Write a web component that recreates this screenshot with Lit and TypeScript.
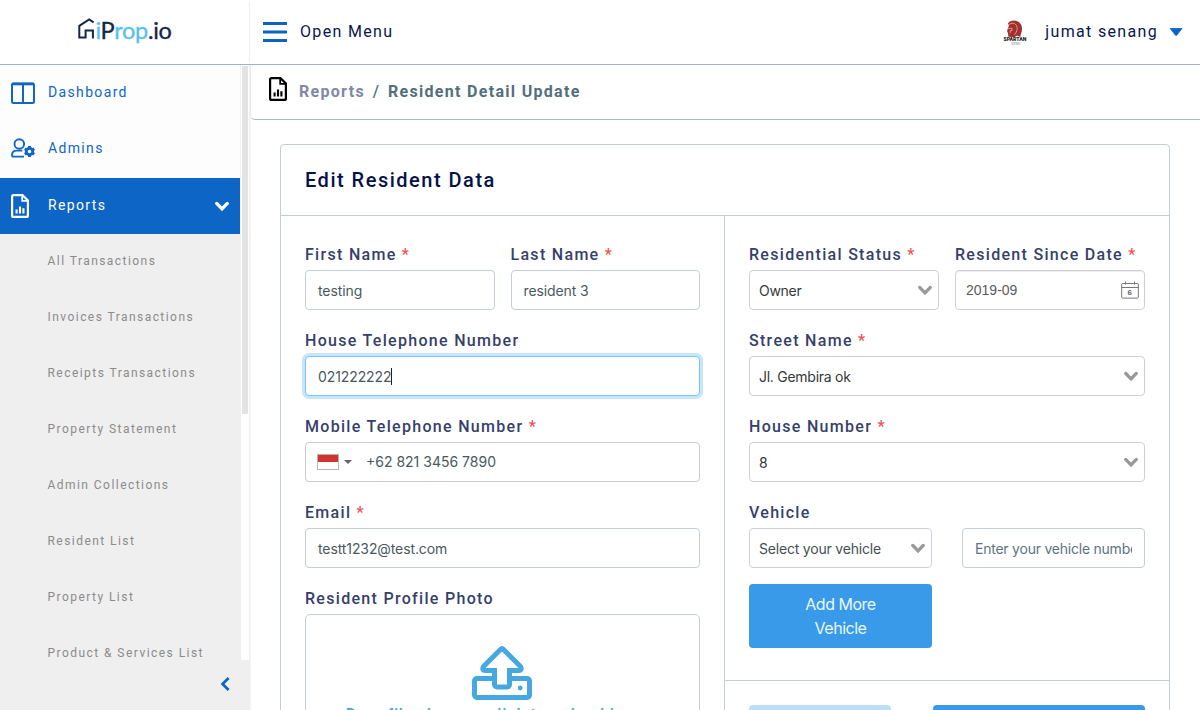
import { LitElement, html, css, nothing } from "lit";
import { customElement, property } from "lit/decorators.js";

const chevron = (cls: string) => html`<svg class=${cls} width="16" height="11" viewBox="0 0 16 11" fill="none"
  stroke="currentColor" stroke-width="3.3" stroke-linecap="round" stroke-linejoin="miter"><path d="M2.7 2.4 8 7.9 13.3 2.4"/></svg>`;

const reportIcon = (cls: string) => html`<svg class=${cls} width="18" height="24" viewBox="0 0 18 24" fill="none">
  <path d="M2.6 1.1h8.9l5.4 5.4v14.9a1.5 1.5 0 0 1-1.5 1.5H2.6a1.5 1.5 0 0 1-1.5-1.5V2.6a1.5 1.5 0 0 1 1.5-1.5z" stroke="currentColor" stroke-width="2.2"/>
  <path d="M11.2 1.5v5.3h5.4" stroke="currentColor" stroke-width="1.8"/>
  <path d="M5.6 15.6v3.8M9 12.4v7M12.4 14.2v5.2" stroke="currentColor" stroke-width="2.1"/>
</svg>`;

@customElement("form-field")
export class FormField extends LitElement {
  static styles = css`
    :host { display: block; min-width: 0; }
    .label { height: 30px; line-height: 29px; font-size: 16px; font-weight: 500; letter-spacing: 1.3px; color: #363f6c; white-space: nowrap; }
    .required { color: #f0524f; }
  `;
  @property() label = "";
  @property({ type: Boolean }) required = false;
  render() {
    return html`<div class="label">${this.label}${this.required ? html` <span class="required">*</span>` : nothing}</div><slot></slot>`;
  }
}

@customElement("app-root")
export class AppRoot extends LitElement {
  static styles = css`
    :host { display: block; height: 710px; overflow: hidden; background: #fff; font-family: Roboto, "Liberation Sans", sans-serif; }
    * { box-sizing: border-box; }
    svg { display: block; flex: none; overflow: visible; }
    .page { display: grid; grid-template: 65px 645px / 250px 950px; height: 710px; }
    .brand { border-bottom: 1px solid #9fb5c0; display: flex; padding: 2px 0 2px; }
    .brand-inner { flex: 1; border-right: 1px solid #efefef; padding: 15px 0 0 77px; }
    .wordmark { font-family: Lato, sans-serif; font-size: 23.5px; font-weight: 400; fill: #14264a; stroke: #14264a; stroke-width: 0.35; }
    .sky { fill: #56c1ee; stroke: #56c1ee; }
    .topbar { border-bottom: 1px solid #9fb5c0; display: flex; align-items: center; padding: 0 17px 0 13px; color: #0a1551; font-size: 16px; letter-spacing: 1.33px; }
    .top-text { padding-bottom: 2px; }
    .burger { margin-right: 13px; color: #0b63c5; }
    .spacer { flex: 1; }
    .avatar { margin-right: 18px; }
    .caret { margin-left: 11px; color: #0b63c5; }
    .sidebar { display: flex; flex-direction: column; background: #f1f1f1; }
    .scroll { height: 595px; display: flex; overflow: hidden; padding-right: 1px; }
    .nav { width: 240px; flex: none; background: #fdfdfd; }
    .nav-item { display: flex; align-items: center; height: 56px; padding: 0 10px 0 11px; color: #0f66c4; font-size: 14px; letter-spacing: 1.35px; }
    .nav-item.active { background: #0d65c5; color: #fff; margin-top: 1px; }
    .nav-icon { width: 37px; flex: none; }
    .nav-icon.raised { padding-bottom: 2px; }
    .nav-text { flex: 1; padding-bottom: 2px; }
    .sub { background: #efefef; }
    .sub-item { height: 56px; line-height: 54px; padding-left: 47.5px; font-size: 12px; letter-spacing: 1.45px; color: #8b8b8b; white-space: nowrap; }
    .track { flex: 1; background: #fff; border-left: 1px solid #efefef; padding: 1px 1px 0; }
    .thumb { height: 348px; background: #e3e3e3; }
    .collapse { flex: 1; background: #efefef; padding: 17px 20px 0 0; display: flex; justify-content: flex-end; color: #0d65c5; }
    .main { min-width: 0; box-shadow: inset 1px 0 0 #f4f4f4; overflow: hidden; }
    .crumbs { height: 55px; border-bottom: 1px solid #a9bcc6; border-left: 1px solid #e3e9ed; border-bottom-left-radius: 5px; background: #fff; display: flex; padding: 12px 0 0 18px; font-size: 16px; font-weight: 700; letter-spacing: 1.3px; color: #526f7e; }
    .crumb-text { margin: 5px 0 0 12px; white-space: pre; }
    .crumb-link { color: #8087a8; }
    .crumb-sep { font-weight: 500; padding: 0 2.5px; }
    .crumb-icon { color: #000; }
    .card { margin: 24px 30px 0 30px; border: 1px solid #c0ced6; border-radius: 4px; height: 620px; }
    .card-head { height: 71px; border-bottom: 1px solid #c0ced6; padding: 0 24px; line-height: 70px; font-size: 20px; font-weight: 500; letter-spacing: 1.5px; color: #041149; }
    .cols { display: grid; grid-template-columns: 444px 444px; height: 548px; }
    .col-left { border-right: 1px solid #c0ced6; padding: 24px; display: flex; flex-direction: column; gap: 16px; }
    .upper { height: 465px; padding: 24px; display: flex; flex-direction: column; gap: 16px; border-bottom: 1px solid #c0ced6; }
    .pair { display: grid; grid-template-columns: 1fr 1fr; gap: 16px; }
    .pair.wide { gap: 30px; }
    .box { height: 40px; border: 1px solid #c2cfd7; border-radius: 4px; padding: 0 12px; display: flex; align-items: center; font-family: Inter, sans-serif; font-size: 14px; letter-spacing: -0.1px; color: #4a5960; background: #fff; white-space: nowrap; overflow: hidden; }
    .txt { padding-top: 1px; }
    .box.focus { border-color: #76c7f8; box-shadow: 0 0 0 3px #c7e6fb; overflow: visible; }
    .cursor { width: 1px; height: 17px; background: #222; }
    .box.select { border-color: #ccd0dc; padding: 0 5px 0 9px; justify-content: space-between; color: #35383b; letter-spacing: -0.27px; }
    .box.vehicle { color: #454f55; letter-spacing: -0.2px; }
    .box.phone { border-color: #cacaca; padding-left: 11px; padding-bottom: 1px; letter-spacing: 0; }
    .box.date { border-color: #ccd0dc; padding: 0 5px 0 10px; justify-content: space-between; color: #5b5b5b; font-family: "Liberation Sans", sans-serif; letter-spacing: 0; box-shadow: inset 0 1px 1px #00000013; }
    .box.placeholder { color: #5e7480; letter-spacing: -0.23px; }
    .clip { overflow: hidden; padding-top: 1px; }
    .arrow { color: #999; }
    .flag { width: 22px; height: 16px; border: 1px solid #b5b5b5; background: linear-gradient(#d0342c 50%, #fff 50%); }
    .tri { margin: 0 14px 0 5px; color: #666; }
    .drop { height: 150px; border: 1px solid #c2cfd7; border-radius: 5px; padding: 31px 1px 0 0; display: flex; flex-direction: column; align-items: center; color: #46a8e0; font-size: 16px; font-weight: 500; letter-spacing: 0.85px; white-space: nowrap; }
    .drop-text { margin-top: 5px; }
    .btn { height: 64px; border-radius: 4px; background: #389ae8; color: #eaf8ff; font-family: Inter, sans-serif; font-size: 16px; letter-spacing: -0.48px; line-height: 24px; text-align: center; width: 183px; padding: 8px 40px; margin: 0; }
    .actions { display: flex; justify-content: space-between; padding: 24px; }
    .action { height: 40px; border-radius: 4px; width: 142px; background: #bcdffc; }
    .action.primary { width: 212px; background: #389ae8; }
  `;

  private subs = ["All Transactions", "Invoices Transactions", "Receipts Transactions", "Property Statement", "Admin Collections", "Resident List", "Property List", "Product & Services List"];

  private select(text: string, cls = "") {
    return html`<div class="box select ${cls}"><span class="txt">${text}</span>${chevron("arrow")}</div>`;
  }

  private header() {
    return html`
      <div class="brand"><div class="brand-inner">
        <svg width="100" height="34" viewBox="0 0 100 34">
          <path d="M16.600 5.300 12.200 2.400 2.300 8.900V20.500H8.600V13.400H15.900V21.500" fill="none" stroke="#14264a" stroke-width="2"/>
          <text class="wordmark" x="18.400" y="21.800" textLength="76.500" lengthAdjust="spacing"><tspan class="sky">i</tspan>P<tspan class="sky">rop</tspan>.io</text>
        </svg>
      </div></div>
      <div class="topbar">
        <svg class="burger" width="24" height="20" viewBox="0 0 24 20"><path d="M0 0h24v3H0zM0 8.500h24v3H0zM0 17h24v3H0z" fill="currentColor"/></svg>
        <span class="top-text">Open Menu</span><div class="spacer"></div>
        <svg class="avatar" width="24" height="26" viewBox="0 0 24 26">
          <path d="M5 4.200C6.800 1.400 12 .8 15.400 2.800c4 2.600 4.400 7.500 2.600 11.900l-.8 3.200-3.200-1.500-2.600 1.800-6-.4-.4-3.300-.9-2.400.8-2.800 1-2.600z" fill="#a3302c"/>
          <path d="M5.600 6c3-2.800 7.200-2.200 8.400 1.600.7 3-.3 5.600-2.600 8.100M5 9.400h4v2.200H7.200v2.600" fill="none" stroke="#e8c4c2" stroke-width=".7"/>
          <text x="0.400" y="22.200" font-family="Roboto" font-size="5.200" font-weight="900" letter-spacing="-.1" textLength="23" fill="#222">SPARTAN</text>
          <text x="8.400" y="25.800" font-family="Roboto" font-size="3.200" letter-spacing="0" fill="#888">GYMS</text>
        </svg>
        <span class="top-text">jumat senang</span>
        <svg class="caret" width="14" height="8" viewBox="0 0 14 8"><path d="M1.200.5h11.800L7.900 7.100q-.8.8-1.600 0z" fill="currentColor" stroke="currentColor" stroke-width=".8" stroke-linejoin="round"/></svg>
      </div>`;
  }

  private sidebar() {
    return html`<div class="sidebar">
      <div class="scroll">
        <div class="nav">
          <div class="nav-item"><div class="nav-icon">
            <svg width="24" height="22" viewBox="0 0 24 22" fill="none" stroke="currentColor"><rect x="1" y="1.500" width="22" height="19.500" rx="1.500" stroke-width="2"/><path d="M12 2v19" stroke-width="2"/><path d="M1 2h22" stroke-width="2.600"/></svg>
          </div><span class="nav-text">Dashboard</span></div>
          <div class="nav-item"><div class="nav-icon raised">
            <svg width="25" height="20" viewBox="0 0 25 20" fill="none" stroke="currentColor" stroke-width="1.900"><circle cx="8.300" cy="6" r="4.800"/><path d="M13 18.600H2.300A1.300 1.300 0 0 1 1 17.300c0-2.900 1.700-4.700 4.500-4.700h5.800"/>
            <circle cx="18.500" cy="13.500" r="3.200" stroke-width="2.800"/><path d="M18.500 8v2.600M18.500 16.400V19M13.740 10.750l2.250 1.300M21.010 14.950l2.250 1.300M13.740 16.250l2.250-1.300M21.010 12.050l2.250-1.300" stroke-width="3"/></svg>
          </div><span class="nav-text">Admins</span></div>
          <div class="nav-item active"><div class="nav-icon">${reportIcon("")}</div><span class="nav-text">Reports</span>${chevron("")}</div>
          <div class="sub">${this.subs.map((s) => html`<div class="sub-item">${s}</div>`)}</div>
        </div>
        <div class="track"><div class="thumb"></div></div>
      </div>
      <div class="collapse"><svg width="10" height="14" viewBox="0 0 10 14" fill="none" stroke="currentColor" stroke-width="2.800"><path d="M8.600 1 2.600 7l6 6"/></svg></div>
    </div>`;
  }

  private leftColumn() {
    return html`<div class="col-left">
      <div class="pair">
        <form-field label="First Name" required><div class="box"><span class="txt">testing</span></div></form-field>
        <form-field label="Last Name" required><div class="box"><span class="txt">resident 3</span></div></form-field>
      </div>
      <form-field label="House Telephone Number"><div class="box focus"><span class="txt">021222222</span><div class="cursor"></div></div></form-field>
      <form-field label="Mobile Telephone Number" required><div class="box phone"><div class="flag"></div>
        <svg class="tri" width="8" height="4" viewBox="0 0 8 4"><path d="M0 0h8L4 4z" fill="currentColor"/></svg><span>+62 821 3456 7890</span></div></form-field>
      <form-field label="Email" required><div class="box"><span class="txt">testt1232@test.com</span></div></form-field>
      <form-field label="Resident Profile Photo"><div class="drop">
        <svg width="60" height="54" viewBox="0 0 60 54" fill="none" stroke="currentColor" stroke-width="5" stroke-linejoin="round">
          <path d="M22.500 32.500H5A2.500 2.500 0 0 0 2.500 35V49A2.500 2.500 0 0 0 5 51.500H55A2.500 2.500 0 0 0 57.500 49V35A2.500 2.500 0 0 0 55 32.500H37.500"/>
          <path d="M22.500 24.500V38.500A2.500 2.500 0 0 0 25 41H35A2.500 2.500 0 0 0 37.500 38.500V24.500H47Q50.500 24 48.500 20.500L31.500 3.500Q30 2 28.500 3.500L11.500 20.500Q9.500 24 13 24.500Z" stroke-linejoin="miter"/>
          <circle cx="48.200" cy="42" r="2.400" fill="currentColor" stroke="none"/>
        </svg>
        <div class="drop-text">Drag files here or click to upload image</div>
      </div></form-field>
    </div>`;
  }

  private rightColumn() {
    return html`<div class="col-right">
      <div class="upper">
        <div class="pair">
          <form-field label="Residential Status" required>${this.select("Owner")}</form-field>
          <form-field label="Resident Since Date" required><div class="box date"><span>2019-09</span>
            <svg width="18" height="18" viewBox="0 0 18 18" fill="none" stroke="#777"><path d="M1.500 2.500h15a.8.8 0 0 1 .8.8v13a.8.8 0 0 1-.8.8h-15a.8.8 0 0 1-.8-.8v-13a.8.8 0 0 1 .8-.8zM.5 6.500h17M4.500.5v3M13.500.5v3"/><text x="6.600" y="14.400" font-family="Liberation Sans" font-size="8" font-weight="700" fill="#666" stroke="none">6</text></svg>
          </div></form-field>
        </div>
        <form-field label="Street Name" required>${this.select("Jl. Gembira ok")}</form-field>
        <form-field label="House Number" required>${this.select("8")}</form-field>
        <div>
          <form-field label="Vehicle"><div class="pair wide">
            ${this.select("Select your vehicle", "vehicle")}
            <div class="box placeholder"><div class="clip">Enter your vehicle number</div></div>
          </div></form-field>
        </div>
        <div class="btn">Add More Vehicle</div>
      </div>
      <div class="actions"><div class="action"></div><div class="action primary"></div></div>
    </div>`;
  }

  render() {
    return html`<div class="page">
      ${this.header()}
      ${this.sidebar()}
      <div class="main">
        <div class="crumbs">${reportIcon("crumb-icon")}<div class="crumb-text"><span class="crumb-link">Reports</span><span class="crumb-sep"> / </span>Resident Detail Update</div></div>
        <div class="card">
          <div class="card-head">Edit Resident Data</div>
          <div class="cols">${this.leftColumn()}${this.rightColumn()}</div>
        </div>
      </div>
    </div>`;
  }
}
